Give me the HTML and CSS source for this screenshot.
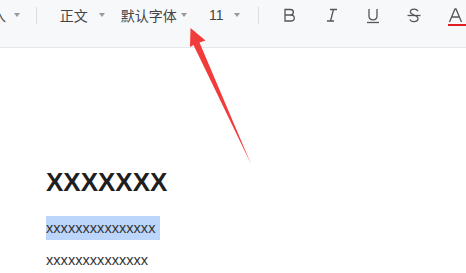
FILE: index.html
```html
<!DOCTYPE html>
<html lang="zh-CN">
<head>
    <meta charset="UTF-8">
    <title>Editor</title>
    <link rel="stylesheet" href="styles.css">
</head>
<body>
    <div class="toolbar">
        <div class="tool tool-insert">插入<span class="caret"></span></div>
        <div class="sep"></div>
        <div class="tool tool-style">正文<span class="caret"></span></div>
        <div class="tool tool-font">默认字体<span class="caret"></span></div>
        <div class="tool tool-size">11<span class="caret"></span></div>
        <div class="sep sep-2"></div>
        <div class="icon icon-b">
            <svg width="14" height="16" viewBox="0 0 14 16"><path d="M2 2.5h5.2c2 0 3.2 1.1 3.2 2.8 0 1.6-1.2 2.7-3.2 2.7H2zM2 8h5.8c2.2 0 3.5 1.2 3.5 3s-1.3 3-3.5 3H2z" fill="none" stroke="#555" stroke-width="1.3"/></svg>
        </div>
        <div class="icon icon-i">
            <svg width="14" height="16" viewBox="0 0 14 16"><path d="M5 2.5h7M2 14h7M8.5 2.5L5.5 14" fill="none" stroke="#555" stroke-width="1.3"/></svg>
        </div>
        <div class="icon icon-u">
            <svg width="16" height="18" viewBox="0 0 16 18"><path d="M4 2v7c0 2.5 1.6 3.8 4 3.8s4-1.3 4-3.8V2" fill="none" stroke="#555" stroke-width="1.3"/><path d="M2 15.5h12" stroke="#555" stroke-width="1.3"/></svg>
        </div>
        <div class="icon icon-s">
            <svg width="16" height="18" viewBox="0 0 16 18"><path d="M12 4.2c-.7-1.3-2-2-3.9-2-2.3 0-3.7 1.1-3.7 2.8 0 3.6 7.6 2.4 7.6 6.6 0 1.8-1.5 3.1-4 3.1-2 0-3.5-.8-4.2-2.2" fill="none" stroke="#555" stroke-width="1.3"/><path d="M1.5 8.5h13" stroke="#555" stroke-width="1.3"/></svg>
        </div>
        <div class="icon icon-a">
            <svg width="16" height="18" viewBox="0 0 16 18"><path d="M1.5 15L7 2h1l5.5 13M3.8 10h7.4" fill="none" stroke="#555" stroke-width="1.3"/></svg>
            <div class="color-bar"></div>
        </div>
    </div>

    <div class="page">
        <h1 class="title">XXXXXXX</h1>
        <p class="line"><span class="selected">xxxxxxxxxxxxxxx</span></p>
        <p class="line">xxxxxxxxxxxxxx</p>
    </div>

    <svg class="pointer" width="466" height="273" viewBox="0 0 466 273">
        <path d="M190.5 28 L205.5 40.5 L199.5 42.5 L251 164 L193.5 45 L190 47 Z" fill="#f23b3b"/>
    </svg>
</body>
</html>
```

FILE: styles.css
```css
* {
    box-sizing: border-box;
}

body {
    margin: 0;
    background-color: #fff;
    font-family: "Liberation Sans", "Noto Sans CJK SC", sans-serif;
    overflow: hidden;
    position: relative;
    height: 273px;
}

.toolbar {
    height: 48px;
    background-color: #f7f8fa;
    border-bottom: 1px solid #e6e7ea;
    display: flex;
    align-items: flex-start;
    padding-top: 5px;
    margin-left: -22px;
    color: #444;
    font-size: 14px;
}

.tool {
    display: flex;
    align-items: center;
    height: 20px;
    white-space: nowrap;
}

.caret {
    display: inline-block;
    width: 0;
    height: 0;
    border-left: 3px solid transparent;
    border-right: 3px solid transparent;
    border-top: 4px solid #999;
    margin-left: 7px;
}

.tool-insert {
    width: 59px;
}

.tool-insert .caret {
    margin-left: 8px;
}

.sep {
    width: 1px;
    height: 17px;
    margin-top: 2px;
    background-color: #dcdde0;
}

.tool-style {
    margin-left: 23px;
    width: 62px;
}

.tool-style .caret {
    margin-left: 11px;
}

.tool-font {
    width: 90px;
}

.tool-font .caret {
    margin-left: 4px;
}

.tool-size {
    width: 50px;
}

.tool-size .caret {
    margin-left: 10px;
}

.icon {
    display: flex;
    flex-direction: column;
    align-items: flex-start;
    height: 22px;
    padding-top: 2px;
}

.icon-b {
    margin-left: 24px;
}

.icon-i {
    margin-left: 28px;
}

.icon-u {
    margin-left: 26px;
}

.icon-s {
    margin-left: 25px;
}

.icon-a {
    margin-left: 26px;
}

.color-bar {
    width: 18px;
    height: 2px;
    background-color: #e02020;
    margin-top: -1px;
}

.page {
    padding: 119px 0 0 46px;
}

.page .title {
    margin: 0;
    font-size: 26px;
    font-weight: bold;
    color: #1f1f1f;
    line-height: 30px;
}

.line {
    margin: 0;
    font-size: 14.6px;
    color: #333;
    line-height: 24px;
}

.title + .line {
    margin-top: 19px;
}

.line + .line {
    margin-top: 8px;
}

.selected {
    background-color: #bcd5fb;
    padding: 4px 5px 4px 0;
}

.pointer {
    position: absolute;
    left: 0;
    top: 0;
    pointer-events: none;
}
```
